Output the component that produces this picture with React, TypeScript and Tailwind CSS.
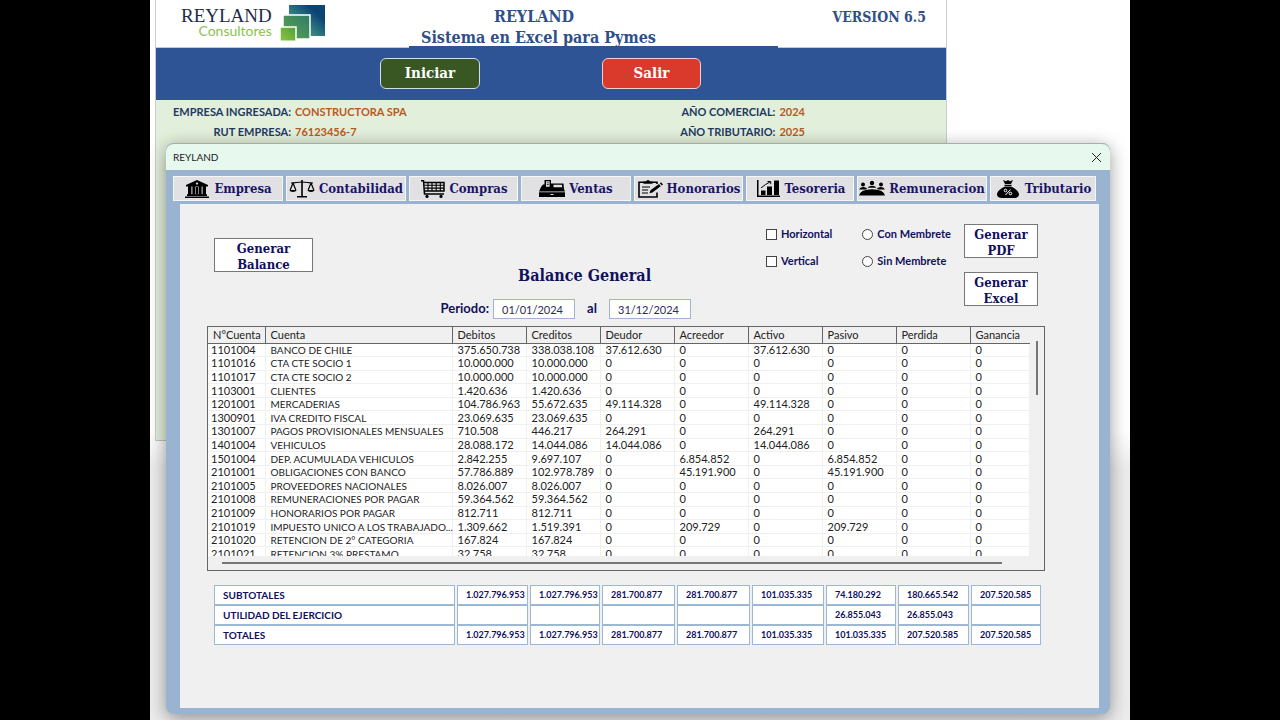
import type { ReactNode } from "react";

const SERIF = "font-['DejaVu_Serif_Condensed','DejaVu_Serif',serif]";

function Icon({ children }: { children: ReactNode }) {
  return (
    <svg
      className="h-[18px] w-[26px] shrink-0"
      viewBox="0 0 26 18"
      fill="black"
      stroke="none"
      aria-hidden="true"
    >
      {children}
    </svg>
  );
}

function BankIcon() {
  return (
    <Icon>
      <path d="M13 0 24 5v1.6H2V5Z" />
      <circle cx="13" cy="3.6" r="1.1" fill="#e1e1e3" />
      <path d="M4 6h3.400v8.500H4zM8.400 6h3v8.500h-3zM14.600 6h3v8.500h-3zM18.600 6H22v8.500h-3.400zM3 14.200h20V16H3zM1 16.400h24V18H1z" />
      <path d="M12 7h2v7.500h-2z" />
    </Icon>
  );
}

function ScaleIcon() {
  return (
    <Icon>
      <path d="M12.200 0h1.600v16h-1.600zM8 16h10v1.600H8z" />
      <g fill="none" stroke="black" strokeWidth="1.200">
        <path d="M2 3c4 0 7-1 11-1s7 1 11 1" />
        <path d="M4 3 1.200 10M4 3 6.800 10M22 3 19.200 10M22 3 24.800 10" />
      </g>
      <path d="M.300 10h7.400q-.8 2-3.700 2t-3.700-2zM18.300 10h7.400q-.8 2-3.700 2t-3.700-2z" />
    </Icon>
  );
}

function CartIcon() {
  return (
    <Icon>
      <g fill="none" stroke="black" strokeWidth="1.500">
        <path d="M1 .800h2.500L4.500 14H24" />
        <path d="M4 2.500h20V11H4.500" />
        <path d="M4 5.300h20M4.500 8.100H24M8 2.500V11M12 2.500V11M16.200 2.500V11M20.300 2.500V11" strokeWidth="1.100" />
      </g>
      <circle cx="7" cy="16.400" r="1.600" />
      <circle cx="21" cy="16.400" r="1.600" />
    </Icon>
  );
}

function RegisterIcon() {
  return (
    <Icon>
      <path d="M2 7 4 4.500h1.500V0H12v3.500h12.500L25 9l1 2.500H0ZM0 12.300h26V17H0z" />
      <path d="M7 1.200h3.600v5.600H7zM14.500 4.800h8.300l.500 2.400h-8.800z" fill="#e1e1e3" />
      <path d="M7.800 2.500h2v.8h-2zM7.800 4.300h2v.8h-2z" />
      <path d="M11.500 14h3v1h-3z" fill="#e1e1e3" />
    </Icon>
  );
}

function ClipboardIcon() {
  return (
    <Icon>
      <path d="M20 12.500V17H2V2.200h18V4" fill="none" stroke="black" strokeWidth="1.600" />
      <path d="M6.500 3.800V1.500H9Q9.500 0 11 0t2 1.500h2.500v2.300Z" />
      <path d="M5 7h8M5 10h6M5 13h6" fill="none" stroke="black" strokeWidth="1.200" />
      <path d="m12.500 13.300 1-3L22 4l1.700 2.200-8.300 6.200ZM22.800 3.300l1.200-1 2 2.300-1.200 1z" />
    </Icon>
  );
}

function ChartIcon() {
  return (
    <Icon>
      <path d="M2 0h1.500v15.500H25V17H2zM6 10.500h4.500V15H6zM12 6.500h5V15h-5zM19 .500h5V15h-5z" />
      <path d="M6 8 10.500 4.500 15 2M12.500 1.500h3.200v2.700" fill="none" stroke="black" />
    </Icon>
  );
}

function MeetingIcon() {
  return (
    <Icon>
      <circle cx="4" cy="4.500" r="2" />
      <circle cx="13" cy="3" r="2.200" />
      <circle cx="22" cy="4.500" r="2" />
      <path d="M0 9.500Q1 7 4 7t4 1.500L7 9.500ZM8.500 7.800Q10 5.800 13 5.800t4.500 2ZM18 8.500Q19 7 22 7t4 2.500h-7ZM0 15.500Q1.500 9.300 13 9.300t13 6.200Z" />
    </Icon>
  );
}

function MoneyBagIcon() {
  return (
    <Icon>
      <path d="m8 0 3 1.300L13 0l2 1.300L18 0l-2 4h-6ZM9.500 4.800h7V6h-7zM10 6.500h6c4 1.800 8 5 8 8 0 2-2 3.500-5 3.500H7c-3 0-5-1.500-5-3.500 0-3 4-6.200 8-8Z" />
      <g fill="none" stroke="white">
        <circle cx="10.500" cy="10.500" r="1.300" />
        <circle cx="15.500" cy="13.500" r="1.300" />
        <path d="m15.500 9.500-5 5.500" />
      </g>
    </Icon>
  );
}

const tabs = [
  { label: "Empresa", icon: <BankIcon />, width: "w-[110px]" },
  { label: "Contabilidad", icon: <ScaleIcon />, width: "w-[120px]" },
  { label: "Compras", icon: <CartIcon />, width: "w-[109px]" },
  { label: "Ventas", icon: <RegisterIcon />, width: "w-[110px]" },
  { label: "Honorarios", icon: <ClipboardIcon />, width: "w-[109px]" },
  { label: "Tesoreria", icon: <ChartIcon />, width: "w-[108px]" },
  { label: "Remuneracion", icon: <MeetingIcon />, width: "w-[130px]" },
  { label: "Tributario", icon: <MoneyBagIcon />, width: "w-[106px]" },
];

const columns = [
  "N°Cuenta",
  "Cuenta",
  "Debitos",
  "Creditos",
  "Deudor",
  "Acreedor",
  "Activo",
  "Pasivo",
  "Perdida",
  "Ganancia",
];

const accounts = [
  ["1101004", "BANCO DE CHILE", "375.650.738", "338.038.108", "37.612.630", "0", "37.612.630", "0", "0", "0"],
  ["1101016", "CTA CTE SOCIO 1", "10.000.000", "10.000.000", "0", "0", "0", "0", "0", "0"],
  ["1101017", "CTA CTE SOCIO 2", "10.000.000", "10.000.000", "0", "0", "0", "0", "0", "0"],
  ["1103001", "CLIENTES", "1.420.636", "1.420.636", "0", "0", "0", "0", "0", "0"],
  ["1201001", "MERCADERIAS", "104.786.963", "55.672.635", "49.114.328", "0", "49.114.328", "0", "0", "0"],
  ["1300901", "IVA CREDITO FISCAL", "23.069.635", "23.069.635", "0", "0", "0", "0", "0", "0"],
  ["1301007", "PAGOS PROVISIONALES MENSUALES", "710.508", "446.217", "264.291", "0", "264.291", "0", "0", "0"],
  ["1401004", "VEHICULOS", "28.088.172", "14.044.086", "14.044.086", "0", "14.044.086", "0", "0", "0"],
  ["1501004", "DEP. ACUMULADA VEHICULOS", "2.842.255", "9.697.107", "0", "6.854.852", "0", "6.854.852", "0", "0"],
  ["2101001", "OBLIGACIONES CON BANCO", "57.786.889", "102.978.789", "0", "45.191.900", "0", "45.191.900", "0", "0"],
  ["2101005", "PROVEEDORES NACIONALES", "8.026.007", "8.026.007", "0", "0", "0", "0", "0", "0"],
  ["2101008", "REMUNERACIONES POR PAGAR", "59.364.562", "59.364.562", "0", "0", "0", "0", "0", "0"],
  ["2101009", "HONORARIOS POR PAGAR", "812.711", "812.711", "0", "0", "0", "0", "0", "0"],
  ["2101019", "IMPUESTO UNICO A LOS TRABAJADO...", "1.309.662", "1.519.391", "0", "209.729", "0", "209.729", "0", "0"],
  ["2101020", "RETENCION DE 2° CATEGORIA", "167.824", "167.824", "0", "0", "0", "0", "0", "0"],
  ["2101021", "RETENCION 3% PRESTAMO", "32.758", "32.758", "0", "0", "0", "0", "0", "0"],
];

const totals = [
  {
    label: "SUBTOTALES",
    values: ["1.027.796.953", "1.027.796.953", "281.700.877", "281.700.877", "101.035.335", "74.180.292", "180.665.542", "207.520.585"],
  },
  {
    label: "UTILIDAD DEL EJERCICIO",
    values: ["", "", "", "", "", "26.855.043", "26.855.043", ""],
  },
  {
    label: "TOTALES",
    values: ["1.027.796.953", "1.027.796.953", "281.700.877", "281.700.877", "101.035.335", "101.035.335", "207.520.585", "207.520.585"],
  },
];

function Logo() {
  return (
    <div className="flex items-start">
      <div className="pt-2 text-right">
        <p className="font-['Liberation_Serif',serif] text-[19px] leading-[16px] text-[#1d2c47]">
          REYLAND
        </p>
        <p className="text-[14px] leading-[14px] text-[#8cc152]">Consultores</p>
      </div>
      <svg className="ml-2 mt-1 h-[38px] w-[46px]" viewBox="0 0 46 38" aria-hidden="true">
        <defs>
          <linearGradient id="logo-back" x1="0" y1="1" x2="1" y2="0">
            <stop offset="0.3" stopColor="#3f8f83" />
            <stop offset="0.75" stopColor="#0c4474" />
          </linearGradient>
          <linearGradient id="logo-mid" x1="0" y1="1" x2="1" y2="0">
            <stop offset="0" stopColor="#5fa548" />
            <stop offset="1" stopColor="#2f7a6c" />
          </linearGradient>
          <linearGradient id="logo-front" x1="0" y1="1" x2="1" y2="0">
            <stop offset="0" stopColor="#8cc63f" />
            <stop offset="1" stopColor="#4f9f3a" />
          </linearGradient>
        </defs>
        <path d="M9 1h36v31H9z" fill="url(#logo-back)" />
        <path d="M3 11h27v24H3z" fill="url(#logo-mid)" stroke="white" strokeWidth="1.500" />
        <path d="M0 23h16v14.200H0z" fill="url(#logo-front)" stroke="white" strokeWidth="1.500" />
      </svg>
    </div>
  );
}

function ActionButton({ children, className }: { children: ReactNode; className: string }) {
  return (
    <button
      type="button"
      className={`${SERIF} ${className} h-[34px] border border-[#777] bg-white pt-0.5 text-[13px] font-bold leading-[16px] text-[#10105c]`}
    >
      {children}
    </button>
  );
}

function Option({ type, name, label }: { type: "checkbox" | "radio"; name: string; label: string }) {
  return (
    <label className="flex items-center gap-1 whitespace-nowrap text-[11px] font-bold leading-[14px]">
      <input
        type={type}
        name={name}
        className="size-[11px] shrink-0 appearance-none border border-[#444] bg-white checked:bg-[#10105c] [&[type=radio]]:rounded-full"
      />
      {label}
    </label>
  );
}

function CompanyInfo({ items, labelWidth }: { items: [string, string][]; labelWidth: string }) {
  return (
    <dl className="text-[11px] font-bold leading-[20px]">
      {items.map(([label, value]) => (
        <div key={label} className="flex gap-1 whitespace-nowrap">
          <dt className={`${labelWidth} text-right text-[#1f3864]`}>{label}</dt>
          <dd className="text-[#b85a1c]">{value}</dd>
        </div>
      ))}
    </dl>
  );
}

function Workbook() {
  return (
    <div className="ml-[5px] w-[792px] border-x border-[#c9ccd0] bg-white">
      <header className="flex h-12 justify-between">
        <div className="w-[253px] border-b border-[#c3c8d4] pl-[25px]">
          <Logo />
        </div>
        <div
          className={`${SERIF} w-[369px] border-b-2 border-[#2f5496] pl-3 pt-2 font-bold text-[#2f4f8a]`}
        >
          <p className="w-[226px] text-center text-[16px] leading-[17px]">REYLAND</p>
          <h1 className="whitespace-nowrap pt-1 text-[16px] leading-[18px]">Sistema en Excel para Pymes</h1>
        </div>
        <p
          className={`${SERIF} w-[168px] border-b border-[#c3c8d4] pr-5 pt-2 text-right text-[14px] font-bold leading-[18px] text-[#2f4f8a]`}
        >
          VERSION 6.5
        </p>
      </header>
      <div
        className={`${SERIF} flex h-[52px] gap-[122px] bg-[#2f5496] pl-[224px] pt-2.5 text-[15px] font-bold text-white`}
      >
        <button type="button" className="h-[31px] w-[100px] rounded-md border border-[#d5dcea] bg-[#385723]">
          Iniciar
        </button>
        <button type="button" className="h-[31px] w-[99px] rounded-md border border-[#f2cfd0] bg-[#d93a2b]">
          Salir
        </button>
      </div>
      <div className="flex h-[341px] border-b border-[#b9c7ae] bg-[#e2efda] pt-0.5">
        <CompanyInfo
          labelWidth="w-[135px]"
          items={[
            ["EMPRESA INGRESADA:", "CONSTRUCTORA SPA"],
            ["RUT EMPRESA:", "76123456-7"],
          ]}
        />
        <div className="ml-auto pr-[141px]">
          <CompanyInfo
            labelWidth="w-[120px]"
            items={[
              ["AÑO COMERCIAL:", "2024"],
              ["AÑO TRIBUTARIO:", "2025"],
            ]}
          />
        </div>
      </div>
    </div>
  );
}

function Toolbar() {
  const dateInput =
    "h-5 w-[82px] border border-[#9fb4d3] bg-white pl-2 text-[11px] font-normal text-[#2b2b60]";

  return (
    <div className="flex items-start text-[#10105c]">
      <div className="pl-[34px] pt-[34px]">
        <ActionButton className="w-[99px]">
          Generar
          <br />
          Balance
        </ActionButton>
      </div>
      <div className="pl-[120px] pt-[62px]">
        <h2 className={`${SERIF} pl-[85px] text-[16px] font-bold leading-[20px]`}>
          Balance General
        </h2>
        <div className="flex items-center pt-[13px] text-[13px] font-bold">
          <label htmlFor="from" className="w-[60px] pr-1 text-right">
            Periodo:
          </label>
          <input id="from" className={dateInput} defaultValue="01/01/2024" />
          <label htmlFor="to" className="w-[34px] text-center">
            al
          </label>
          <input id="to" className={dateInput} defaultValue="31/12/2024" />
        </div>
      </div>
      <div className="ml-auto flex gap-4 pt-5">
        <div className="flex w-[182px] gap-[30px] pt-[3px]">
          <div className="flex flex-col gap-[13px]">
            <Option type="checkbox" name="horizontal" label="Horizontal" />
            <Option type="checkbox" name="vertical" label="Vertical" />
          </div>
          <div className="flex flex-col gap-[13px]">
            <Option type="radio" name="membrete" label="Con Membrete" />
            <Option type="radio" name="membrete" label="Sin Membrete" />
          </div>
        </div>
        <div className="flex flex-col gap-3.5 pr-[61px]">
          <ActionButton className="w-[74px]">
            Generar
            <br />
            PDF
          </ActionButton>
          <ActionButton className="w-[74px]">
            Generar
            <br />
            Excel
          </ActionButton>
        </div>
      </div>
    </div>
  );
}

function AccountsTable() {
  return (
    <div className="ml-[27px] mt-[7px] w-[838px] border border-[#666]">
      <div className="flex">
        <div className="h-[229px] w-[822px] overflow-hidden">
          <table className="h-[234px] w-full table-fixed border-collapse text-left text-[11px] leading-[12px] text-[#222]">
            <colgroup>
              <col className="w-[57px]" />
              <col className="w-[187px]" />
              {columns.slice(2, 9).map((name) => (
                <col key={name} className="w-[74px]" />
              ))}
              <col />
            </colgroup>
            <thead>
              <tr className="h-4">
                {columns.map((name) => (
                  <th
                    key={name}
                    className="h-4 border-b border-r border-[#666] p-0 pl-[5px] font-normal last:border-r-0"
                  >
                    {name}
                  </th>
                ))}
              </tr>
            </thead>
            <tbody className="bg-white">
              {accounts.map((row) => (
                <tr key={row[0]}>
                  {row.map((cell, i) => (
                    <td
                      key={i}
                      className="whitespace-nowrap border-b border-r border-[#f0f0ee] p-0 pl-[5px] first:pl-[3px] [&:nth-child(2)]:text-[10px]"
                    >
                      {cell}
                    </td>
                  ))}
                </tr>
              ))}
            </tbody>
          </table>
        </div>
        <div className="ml-[6px] mt-[14px] h-[54px] w-0.5 bg-[#777]" />
      </div>
      <div className="mb-[6px] ml-3.5 mt-[6px] h-0.5 w-[780px] bg-[#777]" />
    </div>
  );
}

function TotalsTable() {
  return (
    <table className="ml-8 mt-3.5 w-[831px] table-fixed border-separate border-spacing-x-0.5 border-spacing-y-0 text-left text-[10px] font-bold leading-[14px] text-[#10105c]">
      <colgroup>
        <col className="w-[241px]" />
        <col className="w-[71px]" />
        <col className="w-[70px]" />
        <col className="w-[73px]" />
        <col className="w-[73px]" />
        <col className="w-[72px]" />
        <col className="w-[70px]" />
        <col className="w-[71px]" />
        <col className="w-[70px]" />
      </colgroup>
      <tbody>
        {totals.map((row) => (
          <tr key={row.label} className="h-5">
            <th className="border border-[#9db8d4] bg-white p-0 pl-2">{row.label}</th>
            {row.values.map((value, i) => (
              <td
                key={i}
                className="whitespace-nowrap border border-[#9db8d4] bg-white p-0 pl-2 text-[9px]"
              >
                {value}
              </td>
            ))}
          </tr>
        ))}
      </tbody>
    </table>
  );
}

function Dialog() {
  return (
    <section
      role="dialog"
      aria-label="REYLAND"
      className="absolute left-4 right-5 top-[143px] rounded-lg bg-[#99b3d1] shadow-[0_4px_18px_rgba(0,0,0,0.4)]"
    >
      <div className="flex h-[27px] items-center justify-between rounded-t-lg border-t border-[#a5b0aa] bg-[#e7f8ef] pl-[7px] pr-2 text-[10px] text-[#222]">
        <span>REYLAND</span>
        <button type="button" aria-label="Cerrar">
          <svg className="size-[11px]" viewBox="0 0 11 11" aria-hidden="true">
            <path d="m1 1 9 9M10 1l-9 9" stroke="#222" fill="none" />
          </svg>
        </button>
      </div>
      <nav className={`${SERIF} flex gap-[3px] px-[7px] pt-1.5 text-[13px] font-bold text-[#1a1469]`}>
        {tabs.map((tab) => (
          <button
            key={tab.label}
            type="button"
            className={`${tab.width} flex h-[25px] items-center justify-center gap-1 whitespace-nowrap border border-[#f4f6fa] bg-[#e1e1e3]`}
          >
            {tab.icon}
            {tab.label}
          </button>
        ))}
      </nav>
      <div className="mb-1.5 ml-3.5 mr-[11px] mt-[3px] min-h-[504px] bg-[#f0f0f0]">
        <Toolbar />
        <AccountsTable />
        <TotalsTable />
      </div>
    </section>
  );
}

export default function App() {
  return (
    <div className="min-h-screen bg-black font-['Lato',sans-serif]">
      <main className="relative mx-auto min-h-screen max-w-[980px] overflow-hidden bg-gradient-to-b from-white from-60% to-[#ececec] to-65%">
        <Workbook />
        <Dialog />
      </main>
    </div>
  );
}
